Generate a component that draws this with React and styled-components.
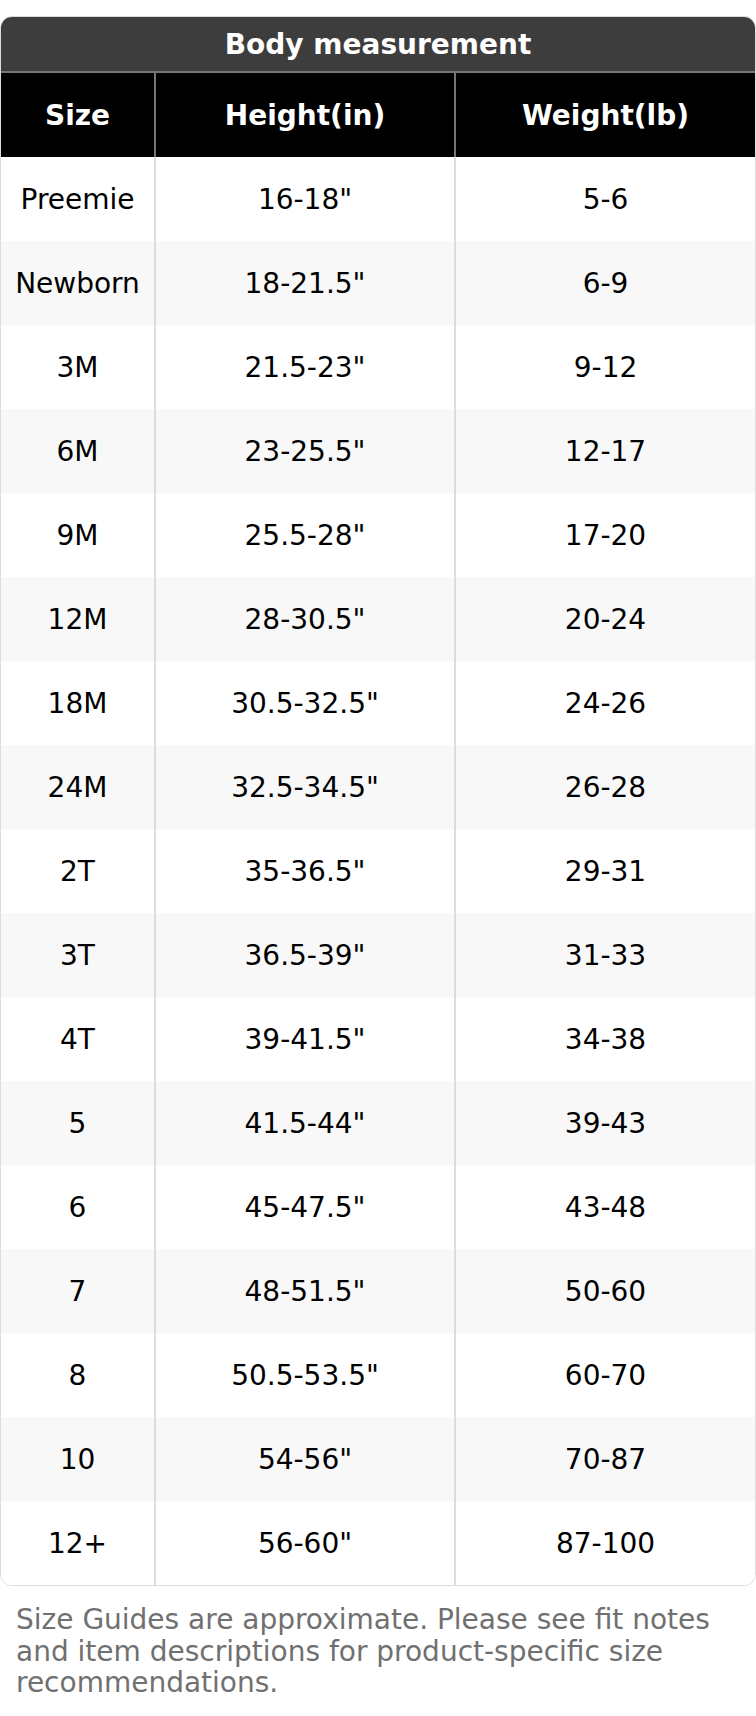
import React from 'react';
import styled, { createGlobalStyle } from 'styled-components';

const rows = [
  ['Preemie', '16-18"', '5-6'],
  ['Newborn', '18-21.5"', '6-9'],
  ['3M', '21.5-23"', '9-12'],
  ['6M', '23-25.5"', '12-17'],
  ['9M', '25.5-28"', '17-20'],
  ['12M', '28-30.5"', '20-24'],
  ['18M', '30.5-32.5"', '24-26'],
  ['24M', '32.5-34.5"', '26-28'],
  ['2T', '35-36.5"', '29-31'],
  ['3T', '36.5-39"', '31-33'],
  ['4T', '39-41.5"', '34-38'],
  ['5', '41.5-44"', '39-43'],
  ['6', '45-47.5"', '43-48'],
  ['7', '48-51.5"', '50-60'],
  ['8', '50.5-53.5"', '60-70'],
  ['10', '54-56"', '70-87'],
  ['12+', '56-60"', '87-100'],
];

const GlobalStyle = createGlobalStyle`
  body {
    margin: 0;
    background: #fff;
    font-family: "DejaVu Sans", Verdana, sans-serif;
  }
`;

const Page = styled.div`
  padding-top: 16px;
`;

const TableWrap = styled.div`
  border: 1px solid #dcdcdc;
  border-radius: 12px;
  overflow: hidden;
`;

const Table = styled.table`
  width: 100%;
  border-collapse: collapse;
  table-layout: fixed;
  font-size: 28px;
`;

const TitleCell = styled.th`
  height: 54px;
  padding: 0;
  background: #3d3d3d;
  color: #fff;
  font-weight: bold;
  border-bottom: 2px solid #767676;
  vertical-align: middle;
`;

const HeadCell = styled.th`
  height: 84px;
  padding: 0;
  background: #000;
  color: #fff;
  font-weight: bold;
  border-right: 2px solid #767676;
  &:last-child {
    border-right: none;
  }
`;

const Row = styled.tr`
  background: ${(p) => (p.$alt ? '#f8f8f8' : '#fff')};
`;

const Cell = styled.td`
  height: 84px;
  padding: 0;
  text-align: center;
  color: #000;
  border-right: 2px solid #dcdcdc;
  &:last-child {
    border-right: none;
  }
`;

const Note = styled.p`
  margin: 18px 0 0;
  padding: 0 16px;
  font-size: 28px;
  line-height: 31.5px;
  color: #707070;
`;

export default function App() {
  return (
    <Page>
      <GlobalStyle />
      <TableWrap>
        <Table>
          <colgroup>
            <col style={{ width: 154 }} />
            <col style={{ width: 300 }} />
            <col />
          </colgroup>
          <thead>
            <tr>
              <TitleCell colSpan={3}>Body measurement</TitleCell>
            </tr>
            <tr>
              <HeadCell>Size</HeadCell>
              <HeadCell>Height(in)</HeadCell>
              <HeadCell>Weight(lb)</HeadCell>
            </tr>
          </thead>
          <tbody>
            {rows.map((r, i) => (
              <Row key={r[0]} $alt={i % 2 === 1}>
                <Cell>{r[0]}</Cell>
                <Cell>{r[1]}</Cell>
                <Cell>{r[2]}</Cell>
              </Row>
            ))}
          </tbody>
        </Table>
      </TableWrap>
      <Note>
        Size Guides are approximate. Please see fit notes and item descriptions for
        product-specific size recommendations.
      </Note>
    </Page>
  );
}
